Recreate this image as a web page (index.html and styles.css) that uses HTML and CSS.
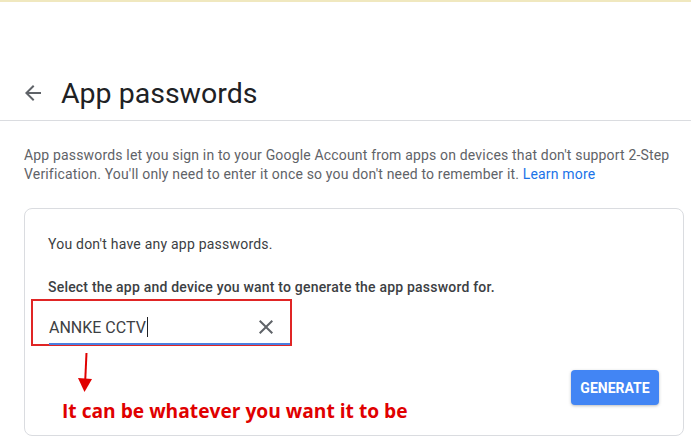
FILE: index.html
```html
<!DOCTYPE html>
<html>
<head>
<meta charset="utf-8">
<link rel="stylesheet" href="styles.css">
</head>
<body>
<div class="topline"></div>
<header class="header">
  <svg class="back" width="24" height="24" viewBox="0 0 24 24"><path d="M20 11H7.83l5.59-5.59L12 4l-8 8 8 8 1.41-1.41L7.83 13H20v-2z" fill="#5f6368"/></svg>
  <h1 class="title">App passwords</h1>
</header>
<main class="content">
  <p class="intro">App passwords let you sign in to your Google Account from apps on devices that don't support 2-Step Verification. You'll only need to enter it once so you don't need to remember it. <a class="link" href="#">Learn more</a></p>
  <section class="card">
    <p class="none">You don't have any app passwords.</p>
    <p class="select">Select the app and device you want to generate the app password for.</p>
    <div class="field-wrap">
      <div class="field">
        <span class="value">ANNKE CCTV<span class="caret"></span></span>
        <svg class="clear" width="24" height="24" viewBox="0 0 24 24"><path d="M19 6.41L17.59 5 12 10.59 6.41 5 5 6.41 10.59 12 5 17.59 6.41 19 12 13.41 17.59 19 19 17.59 13.41 12z" fill="#5f6368"/></svg>
      </div>
    </div>
    <div class="bottom">
      <div class="note">
        <svg class="red-arrow" width="16" height="42" viewBox="0 0 16 42"><path d="M9.5 0 L8.2 28" stroke="#e00000" stroke-width="2" fill="none"/><path d="M1 25 L15 26 L7.5 39 Z" fill="#e00000"/></svg>
        <div class="note-text">It can be whatever you want it to be</div>
      </div>
      <button class="generate">GENERATE</button>
    </div>
  </section>
</main>
</body>
</html>
```
FILE: styles.css
```css
* { box-sizing: border-box; }
html, body { margin: 0; padding: 0; background: #fff; }
body { font-family: Roboto, "Liberation Sans", Arial, sans-serif; color: #3c4043; width: 691px; height: 439px; overflow: hidden; }
.topline { height: 2px; background: #f0e8bf; }
.header { display: flex; align-items: center; height: 119px; padding: 64px 0 0 21px; border-bottom: 1px solid #dadce0; }
.back { margin-top: 0; }
.title { margin: 0 0 0 16px; font-family: Roboto, "Open Sans", sans-serif; font-weight: 400; font-size: 28.5px; color: #202124; letter-spacing: 0; }
.content { padding: 25px 7px 0 24px; }
.intro { margin: 0; font-size: 14px; line-height: 19px; color: #5f6368; letter-spacing: 0.17px; }
.link { color: #1a73e8; text-decoration: none; }
.card { margin-top: 24px; border: 1px solid #dadce0; border-radius: 8px; height: 228px; padding: 25px 24px 0 23px; }
.none { margin: 0; font-size: 14px; line-height: 20px; color: #3c4043; letter-spacing: 0.22px; }
.select { margin: 23px 0 0; font-size: 14px; line-height: 20px; font-weight: 500; color: #3c4043; letter-spacing: 0.2px; }
.field-wrap { margin: 2px 0 0 -17px; width: 261px; height: 47px; border: 2px solid #e02525; padding: 13px 0 0 16px; }
.field { display: flex; align-items: center; justify-content: space-between; width: 241px; height: 31px; border-bottom: 2px solid #4a7fe0; padding-bottom: 3px; }
.value { font-size: 16px; color: #3c4043; display: flex; align-items: center; }
.caret { display: inline-block; width: 1px; height: 20px; background: #202124; margin-left: 1px; }
.clear { margin-right: 12px; }
.bottom { display: flex; justify-content: space-between; align-items: flex-start; }
.note { padding-top: 7px; }
.red-arrow { display: block; margin-left: 29px; }
.note-text { margin: 3px 0 0 14px; font-family: "Open Sans", Lato, sans-serif; font-weight: 700; font-size: 19.2px; line-height: 26px; color: #e00000; white-space: nowrap; }
.generate { margin-top: 24px; height: 35px; width: 88px; border: 0; border-radius: 4px; background: #4285f4; color: #fff; font-family: Roboto, sans-serif; font-weight: 700; font-size: 14px; letter-spacing: 0; box-shadow: 0 1px 3px rgba(60,64,67,0.35); padding: 0; }
```
